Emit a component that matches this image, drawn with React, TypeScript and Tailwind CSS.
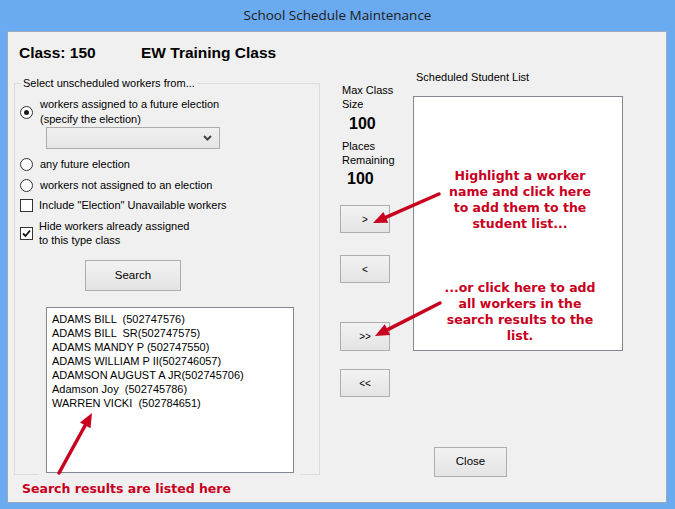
import React from 'react';

const RED = '#c8001e';

const results = [
  'ADAMS BILL  (502747576)',
  'ADAMS BILL  SR(502747575)',
  'ADAMS MANDY P (502747550)',
  'ADAMS WILLIAM P II(502746057)',
  'ADAMSON AUGUST A JR(502745706)',
  'Adamson Joy  (502745786)',
  'WARREN VICKI  (502784651)',
];

function Arrow({ x1, y1, x2, y2 }: { x1: number; y1: number; x2: number; y2: number }) {
  const dx = x2 - x1;
  const dy = y2 - y1;
  const len = Math.hypot(dx, dy);
  const ux = dx / len;
  const uy = dy / len;
  const headLen = 14;
  const headW = 6;
  const bx = x2 - ux * headLen;
  const by = y2 - uy * headLen;
  const px = -uy;
  const py = ux;
  const pts = `${x2},${y2} ${bx + px * headW},${by + py * headW} ${bx - px * headW},${by - py * headW}`;
  return (
    <g>
      <line x1={x1} y1={y1} x2={bx + ux * 2} y2={by + uy * 2} stroke={RED} strokeWidth={3.5} strokeLinecap="round" />
      <polygon points={pts} fill={RED} />
    </g>
  );
}

function Radio({ checked }: { checked?: boolean }) {
  return (
    <span className="flex h-[13px] w-[13px] shrink-0 items-center justify-center rounded-full border border-[#333333] bg-white">
      {checked && <span className="h-[5px] w-[5px] rounded-full bg-[#1a1a1a]" />}
    </span>
  );
}

function Check({ checked }: { checked?: boolean }) {
  return (
    <span className="flex h-[13px] w-[13px] shrink-0 items-center justify-center border border-[#333333] bg-white">
      {checked && (
        <svg width="9" height="9" viewBox="0 0 9 9">
          <path d="M1 4.5 L3.5 7 L8 1.5" fill="none" stroke="#111" strokeWidth="1.8" />
        </svg>
      )}
    </span>
  );
}

function WinButton({ children, className }: { children: React.ReactNode; className: string }) {
  return (
    <div
      className={`flex items-center justify-center border border-[#adadad] bg-linear-to-b from-[#f2f2f2] to-[#e4e4e4] text-black ${className}`}
    >
      {children}
    </div>
  );
}

export default function App() {
  return (
    <div className="relative h-[509px] w-[675px] overflow-hidden bg-[#6aaaf0] font-['Liberation_Sans',Arial,sans-serif] text-[11px] text-black">
      {/* title bar */}
      <div className="flex h-[31px] items-center justify-center font-['Open_Sans',sans-serif] text-[13.5px] text-[#202020]">
        School Schedule Maintenance
      </div>

      {/* client area */}
      <div className="ml-[7px] h-[472px] w-[660px] border border-[#9aa9bb] bg-[#f0f0f0]">
        <div className="flex pl-[11px] pt-[12px] text-[15.5px] font-bold leading-[18px]">
          <span className="w-[122px]">Class: 150</span>
          <span>EW Training Class</span>
        </div>

        <div className="mt-[8px] flex items-start">
          {/* search options */}
          <fieldset className="ml-[6px] mt-[6px] h-[399px] w-[306px] border border-[#dcdcdc] p-0">
            <legend className="ml-[6px] px-[2px] leading-[14px]">Select unscheduled workers from...</legend>
            <div className="flex flex-col items-start">
              <div className="ml-[5px] mt-[7px] flex items-center">
                <Radio checked />
                <div className="ml-[7px] leading-[15px]">
                  workers assigned to a future election
                  <br />
                  (specify the election)
                </div>
              </div>
              <div className="ml-[31px] flex h-[22px] w-[174px] items-center justify-end border border-[#acacac] bg-linear-to-b from-[#f0f0f0] to-[#e5e5e5] pr-[7px]">
                <svg width="9" height="6" viewBox="0 0 9 6">
                  <path d="M1 1 L4.5 4.5 L8 1" fill="none" stroke="#444" strokeWidth="2" />
                </svg>
              </div>
              <div className="ml-[5px] mt-[8px] flex h-[15px] items-center">
                <Radio />
                <span className="ml-[7px]">any future election</span>
              </div>
              <div className="ml-[5px] mt-[6px] flex h-[15px] items-center">
                <Radio />
                <span className="ml-[7px]">workers not assigned to an election</span>
              </div>
              <div className="ml-[5px] mt-[5px] flex h-[15px] items-center">
                <Check />
                <span className="ml-[6px]">Include "Election" Unavailable workers</span>
              </div>
              <div className="ml-[5px] mt-[6px] flex items-center">
                <Check checked />
                <div className="ml-[6px] leading-[14px]">
                  Hide workers already assigned
                  <br />
                  to this type class
                </div>
              </div>
              <WinButton className="ml-[70px] mt-[13px] h-[31px] w-[96px] text-[11.5px]">Search</WinButton>
              <div className="ml-[31px] mt-[16px] h-[166px] w-[248px] border border-[#828790] bg-white pl-[5px] pt-[4px]">
                {results.map((r) => (
                  <div key={r} className="whitespace-pre leading-[14px]">
                    {r}
                  </div>
                ))}
              </div>
            </div>
          </fieldset>

          {/* class size and move buttons */}
          <div className="ml-[20px] flex w-[50px] flex-col items-start whitespace-nowrap">
            <div className="ml-[2px] mt-[14px] leading-[13.5px]">
              Max Class
              <br />
              Size
            </div>
            <div className="ml-[9px] mt-[4px] text-[16px] font-bold leading-[18px]">100</div>
            <div className="ml-[2px] mt-[7px] leading-[13.5px]">
              Places
              <br />
              Remaining
            </div>
            <div className="ml-[7px] mt-[3px] text-[16px] font-bold leading-[18px]">100</div>
            <WinButton className="mt-[17px] h-[28px] w-[50px] text-[10px]">&gt;</WinButton>
            <WinButton className="mt-[22px] h-[28px] w-[50px] text-[10px]">&lt;</WinButton>
            <WinButton className="mt-[39px] h-[29px] w-[50px] text-[10px]">&gt;&gt;</WinButton>
            <WinButton className="mt-[18px] h-[28px] w-[50px] text-[10px]">&lt;&lt;</WinButton>
          </div>

          {/* scheduled list */}
          <div className="ml-[23px] flex flex-col items-start">
            <div className="ml-[3px] leading-[14px]">Scheduled Student List</div>
            <div className="mt-[12px] h-[255px] w-[210px] border border-[#828790] bg-white" />
            <WinButton className="ml-[21px] mt-[96px] h-[30px] w-[73px] text-[11.5px]">Close</WinButton>
          </div>
        </div>
      </div>

      {/* annotation overlay */}
      <div className="absolute left-[39px] top-[474px] h-[24px] w-[261px] bg-[#f0f0f0]" />
      <svg className="pointer-events-none absolute inset-0" width="675" height="509">
        <Arrow x1={439} y1={194} x2={373} y2={223} />
        <Arrow x1={440} y1={303} x2={375} y2={336} />
        <Arrow x1={59} y1={473} x2={92} y2={413} />
      </svg>
      <div className="absolute left-[420px] top-[168px] w-[200px] text-center font-['DejaVu_Sans',Verdana,sans-serif] text-[12.5px] font-bold leading-[16px] text-[#c8001e]">
        Highlight a worker
        <br />
        name and click here
        <br />
        to add them to the
        <br />
        student list...
      </div>
      <div className="absolute left-[420px] top-[280px] w-[200px] text-center font-['DejaVu_Sans',Verdana,sans-serif] text-[12.5px] font-bold leading-[16px] text-[#c8001e]">
        ...or click here to add
        <br />
        all workers in the
        <br />
        search results to the
        <br />
        list.
      </div>
      <div className="absolute left-[22px] top-[481px] font-['DejaVu_Sans',Verdana,sans-serif] text-[12.5px] font-bold leading-[16px] text-[#c8001e]">
        Search results are listed here
      </div>
    </div>
  );
}
